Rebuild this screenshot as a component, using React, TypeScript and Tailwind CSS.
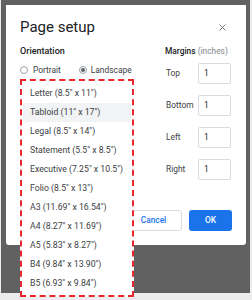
import { X } from 'lucide-react';

const sizes = [
  'Letter (8.5" x 11")',
  'Tabloid (11" x 17")',
  'Legal (8.5" x 14")',
  'Statement (5.5" x 8.5")',
  'Executive (7.25" x 10.5")',
  'Folio (8.5" x 13")',
  'A3 (11.69" x 16.54")',
  'A4 (8.27" x 11.69")',
  'A5 (5.83" x 8.27")',
  'B4 (9.84" x 13.90")',
  'B5 (6.93" x 9.84")',
];

const margins = ['Top', 'Bottom', 'Left', 'Right'];

export default function App() {
  return (
    <div className="relative w-[252px] h-[300px] overflow-hidden bg-[#ececec] font-['Roboto',sans-serif] text-[#3c4043]">
      {/* dimmed doc behind the dialog */}
      <div className="ml-[1px] w-[249px] h-[293px] bg-[#616161] pt-[5px] pl-[5px]">
        <div className="w-[240px] h-[240px] bg-white rounded-b-[3px] flex flex-col px-[14px] pb-[14px]">
          {/* Title */}
          <div className="flex items-center justify-between h-[20px] mt-[12px]">
            <span className="text-[15px] leading-[20px] text-[#202124]">Page setup</span>
            <X className="w-[11px] h-[11px] text-[#5f6368] mr-[4px]" strokeWidth={1.8} />
          </div>

          <div className="flex mt-[8px]">
            {/* Orientation */}
            <div className="w-[145px]">
              <div className="text-[9px] leading-[12px] font-medium text-[#202124]">Orientation</div>
              <div className="flex items-center h-[14px] mt-[6px] text-[8.4px]">
                <span className="w-[8px] h-[8px] rounded-full border border-[#9aa0a6]" />
                <span className="ml-[5px]">Portrait</span>
                <span className="ml-[18px] w-[8px] h-[8px] rounded-full border border-[#9aa0a6] flex items-center justify-center">
                  <span className="w-[4px] h-[4px] rounded-full bg-[#5f6368]" />
                </span>
                <span className="ml-[4px]">Landscape</span>
              </div>
            </div>

            {/* Margins */}
            <div className="flex-1">
              <div className="text-[8.4px] leading-[12px] whitespace-nowrap">
                <span className="font-medium text-[#202124]">Margins</span>{' '}
                <span className="text-[#80868b]">(inches)</span>
              </div>
              <div className="flex flex-col gap-[11px] mt-[6px]">
                {margins.map((m) => (
                  <div key={m} className="flex items-center h-[21px] text-[8.4px]">
                    <span className="w-[33px] pl-[1px]">{m}</span>
                    <div className="w-[33px] h-[21px] border border-[#dadce0] rounded-[2px] flex items-center pl-[5px] text-[#202124]">
                      1
                    </div>
                  </div>
                ))}
              </div>
            </div>
          </div>

          {/* Buttons */}
          <div className="mt-auto flex justify-end gap-[7px]">
            <button className="w-[57px] h-[21px] border border-[#dadce0] rounded-[3px] text-[8.3px] font-medium text-[#1a73e8] bg-white">
              Cancel
            </button>
            <button className="w-[43px] h-[21px] rounded-[3px] text-[8.3px] font-medium text-white bg-[#1a73e8]">
              OK
            </button>
          </div>
        </div>
      </div>

      {/* Paper size dropdown, highlighted */}
      <div className="absolute left-[20px] top-[79px] w-[114px] h-[218px] border-2 border-dashed border-[#e8262b] bg-white pt-[3px] px-[1px]">
        {sizes.map((s, i) => (
          <div
            key={s}
            className={`h-[19px] flex items-center pl-[7px] text-[8.7px] whitespace-nowrap text-[#3c4043] ${
              i === 1 ? 'bg-[#f1f3f4]' : ''
            }`}
          >
            {s}
          </div>
        ))}
      </div>
    </div>
  );
}
